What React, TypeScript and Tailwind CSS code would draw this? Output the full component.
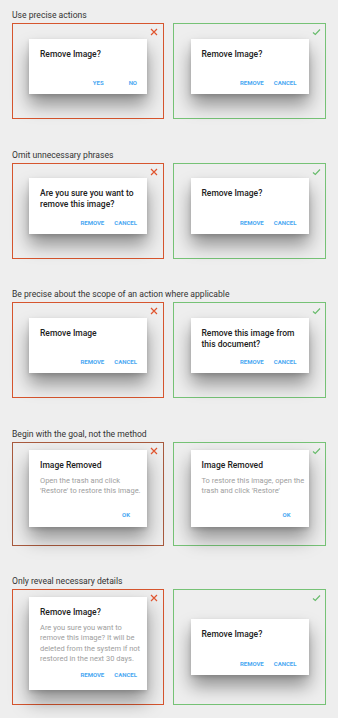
import type { ReactNode } from "react";

type DialogProps = {
  title: ReactNode;
  body?: ReactNode;
  actions: string[];
  gap?: string;
  pr?: string;
  height: string;
  pb?: string;
};

function Dialog({ title, body, actions, gap = "gap-[10px]", pr = "pr-[10px]", height, pb = "pb-[7px]" }: DialogProps) {
  return (
    <div
      className={`flex w-[118px] flex-col justify-between bg-white pl-[11px] pt-[10px] shadow-[0_11px_18px_rgba(0,0,0,0.4),0_2px_4px_rgba(0,0,0,0.14)] ${height} ${pb}`}
    >
      <div>
        <div className="text-[8.5px] leading-[11px] font-medium text-[#212121]">{title}</div>
        {body && <div className="mt-[5px] text-[7.5px] leading-[10.4px] text-[#9e9e9e]">{body}</div>}
      </div>
      <div className={`flex justify-end text-[6px] leading-[8px] font-bold text-[#4aa8f2] ${gap} ${pr}`}>
        {actions.map((a) => (
          <span key={a}>{a}</span>
        ))}
      </div>
    </div>
  );
}

function Cross() {
  return (
    <svg className="absolute right-[5px] top-[4px]" width="8" height="8" viewBox="0 0 8 8">
      <path d="M1 1 L7 7 M7 1 L1 7" stroke="#e0552f" strokeWidth="1.2" fill="none" />
    </svg>
  );
}

function Check() {
  return (
    <svg className="absolute right-[4px] top-[4px]" width="9" height="8" viewBox="0 0 9 8">
      <path d="M1 4.5 L3.3 6.5 L8 1.5" stroke="#66bb6a" strokeWidth="1.1" fill="none" />
    </svg>
  );
}

type Panel = {
  dialog: ReactNode;
  pt: string;
  good?: boolean;
  border?: string;
};

type Section = {
  heading: string;
  height: string;
  left: Panel;
  right: Panel;
  mt: string;
};

function Box({ panel, height }: { panel: Panel; height: string }) {
  const border = panel.border ?? (panel.good ? "border-[#76c276]" : "border-[#d6552e]");
  return (
    <div className={`relative flex justify-center border ${border} ${height} ${panel.pt}`}>
      {panel.good ? <Check /> : <Cross />}
      <div>{panel.dialog}</div>
    </div>
  );
}

const sections: Section[] = [
  {
    heading: "Use precise actions",
    height: "h-[96px]",
    mt: "",
    left: {
      pt: "pt-[15px]",
      dialog: <Dialog title="Remove Image?" actions={["YES", "NO"]} gap="gap-[25px]" height="h-[55px]" />,
    },
    right: {
      good: true,
      pt: "pt-[15px]",
      dialog: <Dialog title="Remove Image?" actions={["REMOVE", "CANCEL"]} pr="pr-[12px]" height="h-[55px]" />,
    },
  },
  {
    heading: "Omit unnecessary phrases",
    height: "h-[96px]",
    mt: "mt-[31px]",
    left: {
      pt: "pt-[14px]",
      dialog: (
        <Dialog
          title={
            <>
              Are you sure you want to
              <br />
              remove this image?
            </>
          }
          actions={["REMOVE", "CANCEL"]}
          height="h-[56px]"
        />
      ),
    },
    right: {
      good: true,
      pt: "pt-[14px]",
      dialog: <Dialog title="Remove Image?" actions={["REMOVE", "CANCEL"]} pr="pr-[12px]" height="h-[56px]" />,
    },
  },
  {
    heading: "Be precise about the scope of an action where applicable",
    height: "h-[96px]",
    mt: "mt-[30px]",
    left: {
      pt: "pt-[15px]",
      dialog: <Dialog title="Remove Image" actions={["REMOVE", "CANCEL"]} height="h-[55px]" />,
    },
    right: {
      good: true,
      pt: "pt-[15px]",
      dialog: (
        <Dialog
          title={
            <>
              Remove this image from
              <br />
              this document?
            </>
          }
          actions={["REMOVE", "CANCEL"]}
          pr="pr-[12px]"
          height="h-[55px]"
        />
      ),
    },
  },
  {
    heading: "Begin with the goal, not the method",
    height: "h-[104px]",
    mt: "mt-[31px]",
    left: {
      pt: "pt-[7px]",
      border: "border-[#a85a3e]",
      dialog: (
        <Dialog
          title="Image Removed"
          body={
            <>
              Open the trash and click
              <br />
              &apos;Restore&apos; to restore this image.
            </>
          }
          actions={["OK"]}
          pr="pr-[17px]"
          pb="pb-[8px]"
          height="h-[77px]"
        />
      ),
    },
    right: {
      good: true,
      pt: "pt-[7px]",
      dialog: (
        <Dialog
          title="Image Removed"
          body={
            <>
              To restore this image, open the
              <br />
              trash and click &apos;Restore&apos;
            </>
          }
          actions={["OK"]}
          pr="pr-[18px]"
          pb="pb-[8px]"
          height="h-[77px]"
        />
      ),
    },
  },
  {
    heading: "Only reveal necessary details",
    height: "h-[116px]",
    mt: "mt-[30px]",
    left: {
      pt: "pt-[7px]",
      dialog: (
        <Dialog
          title="Remove Image?"
          body={
            <>
              Are you sure you want to
              <br />
              remove this image? It will be
              <br />
              deleted from the system if not
              <br />
              restored in the next 30 days.
            </>
          }
          actions={["REMOVE", "CANCEL"]}
          pb="pb-[11px]"
          height="h-[93px]"
        />
      ),
    },
    right: {
      good: true,
      pt: "pt-[29px]",
      dialog: <Dialog title="Remove Image?" actions={["REMOVE", "CANCEL"]} pr="pr-[12px]" height="h-[56px]" />,
    },
  },
];

export default function App() {
  return (
    <div className="min-h-[718px] w-[338px] bg-[#eeeeee] px-[12px] pt-[10px] font-['Roboto',sans-serif]">
      {sections.map((s) => (
        <div key={s.heading} className={s.mt}>
          <div className="text-[8.6px] leading-[11px] text-[#333333]">{s.heading}</div>
          <div className="mt-[2px] grid grid-cols-[152px_153px] gap-[9px]">
            <Box panel={s.left} height={s.height} />
            <Box panel={s.right} height={s.height} />
          </div>
        </div>
      ))}
    </div>
  );
}
